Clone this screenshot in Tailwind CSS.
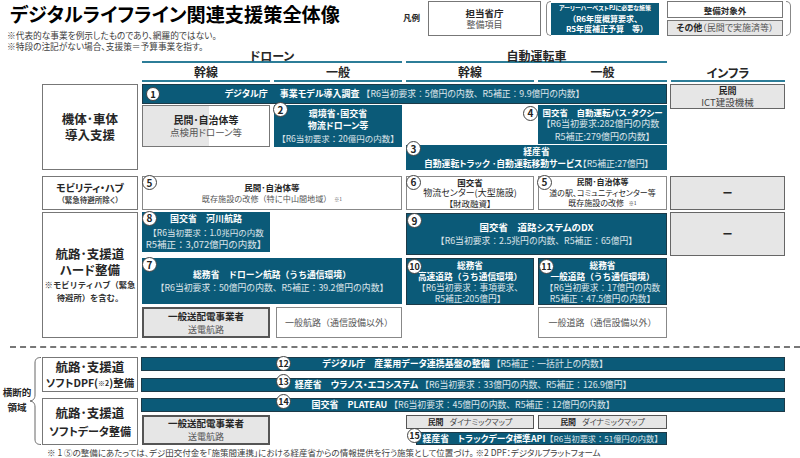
<!DOCTYPE html>
<html lang="ja">
<head>
    <meta charset="UTF-8">
    <title>デジタルライフライン関連支援策全体像</title>
    <script src="https://cdn.jsdelivr.net/npm/@tailwindcss/browser@4"></script>
</head>
<body class="bg-white">
<div class="w-[800px] h-[458px] overflow-hidden relative text-[#262626] font-['Noto_Sans_CJK_JP','Noto_Sans',sans-serif] [font-feature-settings:'palt'] text-[9px] leading-[12px]">

    <!-- title + legend -->
    <header class="flex h-[50px]">
        <div class="w-[403px] pl-[10px]">
            <h1 class="text-[19.2px] leading-[28px] font-bold text-black">デジタルライフライン関連支援策全体像</h1>
            <p class="-ml-[3px] mt-[2px] text-[8.7px] leading-[11px] text-[#404040]">※代表的な事業を例示したものであり、網羅的ではない。<br>※特段の注記がない場合、支援策＝予算事業を指す。</p>
        </div>
        <div class="flex items-start pt-[1px]">
            <div class="w-[25px] pt-[10px] text-[8.5px] font-bold">凡例</div>
            <div class="w-[113px] h-[35px] border border-[#777] flex flex-col items-center justify-center">
                <b class="text-[9.5px]">担当省庁</b>
                <span class="text-[#555]">整備項目</span>
            </div>
            <div class="ml-[5px] w-[5px] h-[35px] border-l border-y border-[#888] rounded-l-[6px]"></div>
            <div class="w-[108px] h-[32px] mt-[2px] bg-[#0b5a78] text-white font-bold text-[8px] leading-[10.5px] flex flex-col items-center justify-center">
                <span class="text-[6px]">アーリーハーベストPJに必要な施策</span>
                <span>（R6年度概算要求、</span>
                <span>R5年度補正予算　等）</span>
            </div>
            <div class="ml-[8px] w-[116px] flex flex-col gap-[2px]">
                <div class="h-[17px] border border-[#777] bg-white flex items-center justify-center font-bold text-[8.5px]">整備対象外</div>
                <div class="h-[16px] border border-[#777] bg-[#e6e6e6] flex items-center justify-center text-[#555]"><b class="text-[#262626]">その他</b>（民間で実施済等）</div>
            </div>
            <div class="ml-[3px] w-[5px] h-[35px] border-r border-y border-[#888] rounded-r-[6px]"></div>
        </div>
    </header>

    <!-- column headers -->
    <div class="ml-[142px] grid grid-cols-[128px_128px_128px_129px_114px] gap-x-[4px] text-[12px] leading-[13px] font-bold text-center h-[34px]">
        <div class="col-span-2 h-[14px] border-b-2 border-[#2c7d98] -mt-[1px]">ドローン</div>
        <div class="col-span-2 h-[14px] border-b-2 border-[#2c7d98] -mt-[1px]">自動運転車</div>
        <div></div>
        <div class="h-[17px] border-b-2 border-[#2c7d98]">幹線</div>
        <div class="h-[17px] border-b-2 border-[#2c7d98]">一般</div>
        <div class="h-[17px] border-b-2 border-[#2c7d98]">幹線</div>
        <div class="h-[17px] border-b-2 border-[#2c7d98]">一般</div>
        <div class="-mt-[14px] h-[31px] pt-[15px] border-b-2 border-[#2c7d98]">インフラ</div>
    </div>

    <!-- 機体・車体 -->
    <section class="ml-[42px] grid grid-cols-[96px_128px_128px_128px_129px_114px] grid-rows-[20px_39px_25px] gap-x-[4px] gap-y-[1px] h-[86px]">
        <div class="row-span-3 col-start-1 row-start-1 border border-[#777] flex items-center justify-center text-center font-bold text-[12.5px] leading-[16px]">機体･車体<br>導入支援</div>
        <div class="relative col-start-2 col-span-4 row-start-1 bg-[#0b5a78] border border-[#1c3a48] text-white flex items-center justify-center gap-[12px]">
            <span class="absolute left-[3px] top-[2px] w-[14px] h-[14px] rounded-full bg-white border border-[#444] text-[#222] flex items-center justify-center font-bold text-[9.5px]">1</span>
            <b>デジタル庁</b>
            <span><b>事業モデル導入調査</b> <span class="text-white/85 [font-feature-settings:normal] text-[8.8px]">【R6当初要求：5億円の内数、R5補正：9.9億円の内数】</span></span>
        </div>
        <div class="col-start-6 row-start-1 row-span-2 self-start h-[25px] ml-[-1px] bg-[#e6e6e6] border border-[#666] flex flex-col items-center justify-center">
            <b class="leading-[11px]">民間</b><span class="text-[#444] text-[9.5px] leading-[12px]">ICT建設機械</span>
        </div>
        <div class="col-start-2 row-start-2 row-span-2 self-start h-[42px] border border-[#777] bg-[linear-gradient(90deg,#e6e6e6_52%,#fff_52%)] flex flex-col items-center justify-center">
            <b class="text-[10px]">民間･自治体等</b>
            <span class="text-[#555] text-[9.5px]">点検用ドローン等</span>
        </div>
        <div class="relative col-start-3 row-start-2 row-span-2 self-start h-[42px] bg-[#0b5a78] text-white flex flex-col items-center justify-center">
            <span class="absolute -left-[1px] -top-[3px] w-[15px] h-[15px] rounded-full bg-white border border-[#444] text-[#222] flex items-center justify-center font-bold text-[10px]">2</span>
            <b>環境省･国交省</b>
            <b>物流ドローン等</b>
            <span class="text-white/85 text-[8.5px] [font-feature-settings:normal]">【R6当初要求：20億円の内数】</span>
        </div>
        <div class="relative col-start-5 row-start-2 bg-[#0b5a78] text-white flex flex-col items-center justify-center leading-[12.5px] text-[9px]">
            <span class="absolute -left-[15px] top-[1px] w-[15px] h-[15px] rounded-full bg-white border border-[#444] text-[#222] flex items-center justify-center font-bold text-[10px]">4</span>
            <b class="text-[8.5px]">国交省　自動運転バス･タクシー</b>
            <span class="text-white/85">【R6当初要求:282億円の内数</span>
            <span class="text-white/85">R5補正:279億円の内数】</span>
        </div>
        <div class="relative col-start-4 col-span-2 row-start-3 bg-[#0b5a78] text-white flex flex-col items-center justify-center leading-[12px] text-[8.8px]">
            <span class="absolute left-[0px] -top-[4px] w-[15px] h-[15px] rounded-full bg-white border border-[#444] text-[#222] flex items-center justify-center font-bold text-[10px]">3</span>
            <b>経産省</b>
            <span><b>自動運転トラック ･自動運転移動サービス</b><span class="text-white/85">【R5補正:27億円】</span></span>
        </div>
    </section>

    <!-- モビリティ・ハブ -->
    <section class="ml-[42px] mt-[6px] grid grid-cols-[96px_260px_128px_129px_114px] gap-x-[4px] h-[31px]">
        <div class="border border-[#777] flex flex-col items-center justify-center text-center">
            <b class="text-[10px] leading-[14px]">モビリティ・ハブ</b>
            <b class="text-[7.5px] leading-[10px] text-[#444]">（緊急待避所除く）</b>
        </div>
        <div class="relative border border-[#888] flex flex-col items-center justify-center text-[8.5px]">
            <span class="absolute -left-[1px] -top-[2px] w-[15px] h-[15px] rounded-full bg-white border border-[#444] flex items-center justify-center font-bold text-[10px]">5</span>
            <b>民間･自治体等</b>
            <span class="text-[#555] text-[8.1px] [font-feature-settings:normal]">既存施設の改修（特に中山間地域）<span class="text-[5px] align-top ml-[3px]">※1</span></span>
        </div>
        <div class="relative border border-[#888] flex flex-col items-center justify-center text-[9px] leading-[10.5px]">
            <span class="absolute -left-[1px] -top-[2px] w-[15px] h-[15px] rounded-full bg-white border border-[#444] flex items-center justify-center font-bold text-[10px]">6</span>
            <b class="text-[8.5px]">国交省</b>
            <span>物流センター(大型施設)</span>
            <span class="text-[8.5px]">【財政融資】</span>
        </div>
        <div class="relative border border-[#888] flex flex-col items-center justify-center text-[8px] leading-[10.5px]">
            <span class="absolute -left-[2px] -top-[2px] w-[15px] h-[15px] rounded-full bg-white border border-[#444] flex items-center justify-center font-bold text-[10px]">5</span>
            <b>民間･自治体等</b>
            <span>道の駅、コミュニティセンター等</span>
            <span>既存施設の改修 <span class="text-[5px] align-top ml-[3px]">※1</span></span>
        </div>
        <div class="ml-[-1px] bg-[#e6e6e6] border border-[#666] flex items-center justify-center font-bold text-[10px]">ー</div>
    </section>

    <!-- 航路・支援道 ハード -->
    <section class="ml-[42px] mt-[5px] grid grid-cols-[96px_128px_128px_128px_129px_114px] grid-rows-[44px_47px_31px] gap-x-[4px] gap-y-[2px] h-[126px]">
        <div class="row-span-3 border border-[#777] flex flex-col items-center justify-center text-center">
            <b class="text-[12.5px] leading-[16px]">航路･支援道<br>ハード整備</b>
            <b class="text-[8.3px] leading-[13px] text-[#333] [font-feature-settings:normal]">※モビリティハブ（緊急<br>待避所）を含む。</b>
        </div>
        <div class="relative col-start-2 row-start-1 self-start h-[40px] bg-[#0b5a78] text-white flex flex-col items-center justify-center leading-[12.5px]">
            <span class="absolute left-0 -top-[1px] w-[15px] h-[15px] rounded-full bg-white border border-[#444] text-[#222] flex items-center justify-center font-bold text-[10px]">8</span>
            <b>国交省　河川航路</b>
            <span class="text-white/85 text-[8.5px] [font-feature-settings:normal]">【R6当初要求：1.0兆円の内数</span>
            <span class="text-white/85 text-[9.5px] [font-feature-settings:normal]">R5補正：3,072億円の内数】</span>
        </div>
        <div class="relative col-start-2 col-span-2 row-start-2 h-[46px] bg-[#0b5a78] text-white flex flex-col items-center justify-center leading-[13px]">
            <span class="absolute left-0 -top-[1px] w-[15px] h-[15px] rounded-full bg-white border border-[#444] text-[#222] flex items-center justify-center font-bold text-[10px]">7</span>
            <b class="[font-feature-settings:normal] text-[8.8px]">総務省　ドローン航路（うち通信環境）</b>
            <span class="text-white/85 [font-feature-settings:normal] text-[8.8px]">【R6当初要求：50億円の内数、R5補正：39.2億円の内数】</span>
        </div>
        <div class="relative col-start-4 col-span-2 row-start-1 mt-[1px] h-[42px] bg-[#0b5a78] border border-[#1c3a48] text-white flex flex-col items-center justify-center leading-[13px]">
            <span class="absolute left-0 -top-[1px] w-[15px] h-[15px] rounded-full bg-white border border-[#444] text-[#222] flex items-center justify-center font-bold text-[10px]">9</span>
            <b class="text-[9.5px]">国交省　道路システムのDX</b>
            <span class="text-white/85 [font-feature-settings:normal] text-[8.8px]">【R6当初要求：2.5兆円の内数、R5補正：65億円】</span>
        </div>
        <div class="col-start-6 row-start-1 ml-[-1px] bg-[#e6e6e6] border border-[#666] flex items-center justify-center font-bold text-[10px]">ー</div>
        <div class="relative col-start-4 row-start-2 bg-[#0b5a78] border border-[#1c3a48] text-white flex flex-col items-center justify-center text-[8.7px] leading-[11px] [font-feature-settings:normal]">
            <span class="absolute left-0 top-0 w-[15px] h-[15px] rounded-full bg-white border border-[#444] text-[#222] flex items-center justify-center font-bold text-[9px]">10</span>
            <b>総務省</b>
            <b>高速道路（うち通信環境）</b>
            <span class="text-white/85">【R6当初要求：事項要求、</span>
            <span class="text-white/85">R5補正:205億円】</span>
        </div>
        <div class="relative col-start-5 row-start-2 bg-[#0b5a78] border border-[#1c3a48] text-white flex flex-col items-center justify-center text-[8.7px] leading-[11px] [font-feature-settings:normal]">
            <span class="absolute left-0 top-0 w-[15px] h-[15px] rounded-full bg-white border border-[#444] text-[#222] flex items-center justify-center font-bold text-[9px]">11</span>
            <b>総務省</b>
            <b>一般道路（うち通信環境）</b>
            <span class="text-white/85">【R6当初要求：17億円の内数</span>
            <span class="text-white/85">R5補正：47.5億円の内数】</span>
        </div>
        <div class="col-start-2 row-start-3 bg-[#e6e6e6] border-2 border-[#555] flex flex-col items-center justify-center">
            <b class="text-[9.5px] leading-[13px]">一般送配電事業者</b>
            <span class="text-[#555] leading-[13px]">送電航路</span>
        </div>
        <div class="col-start-3 row-start-3 ml-[2px] border border-[#888] flex items-center justify-center text-[#555] text-[9px] [font-feature-settings:normal]">一般航路（通信設備以外）</div>
        <div class="col-start-5 row-start-3 border border-[#888] flex items-center justify-center text-[#555] text-[9px] [font-feature-settings:normal]">一般道路（通信設備以外）</div>
    </section>

    <div class="ml-[10px] mt-[8px] border-t-2 border-dashed border-[#777]"></div>

    <!-- 横断的領域 -->
    <section class="mt-[9px] flex">
        <div class="relative w-[42px] h-[88px]">
            <div class="absolute left-[2px] top-[28px] text-[9.5px] leading-[15px] font-bold text-center w-[30px]">横断的<br>領域</div>
            <svg class="absolute left-0 top-0" width="42" height="88" viewBox="0 0 42 88" fill="none" stroke="#666" stroke-width="1">
                <path d="M41 0.5 C37 0.5 35 2 35 6 L35 38 C35 42 33 43.5 30 44 C33 44.5 35 46 35 50 L35 82 C35 86 37 87.5 41 87.5"/>
            </svg>
        </div>
        <div class="w-[743px]">
            <div class="grid grid-cols-[96px_1fr] gap-x-[3px]">
                <div class="row-span-2 h-[35px] border border-[#777] flex flex-col items-center justify-center text-center font-bold leading-[16px]">
                    <span class="text-[12.5px]">航路･支援道</span>
                    <span class="text-[10.5px]">ソフトDPF(<span class="text-[7px] align-top">※2</span>)整備</span>
                </div>
                <div class="relative h-[14px] bg-[#0b5a78] border border-[#1c3a48] text-white flex items-center justify-center">
                    <span class="absolute left-[134px] -top-[2px] w-[15px] h-[15px] rounded-full bg-white border border-[#444] text-[#222] flex items-center justify-center font-bold text-[9px]">12</span>
                    <span class="ml-[4px]"><b>デジタル庁　産業用データ連携基盤の整備</b> <span class="text-white/85 [font-feature-settings:normal] text-[8.8px]">【R5補正：一括計上の内数】</span></span>
                </div>
                <div class="relative mt-[7px] h-[14px] bg-[#0b5a78] border border-[#1c3a48] text-white flex items-center justify-center">
                    <span class="absolute left-[134px] -top-[5px] w-[15px] h-[15px] rounded-full bg-white border border-[#444] text-[#222] flex items-center justify-center font-bold text-[9px]">13</span>
                    <span><b>経産省　ウラノス・エコシステム</b> <span class="text-white/85 [font-feature-settings:normal] text-[8.8px]">【R6当初要求：33億円の内数、R5補正：126.9億円】</span></span>
                </div>
            </div>
            <div class="mt-[6px] grid grid-cols-[96px_128px_128px_128px_129px_114px] grid-rows-[14px_14px_14px] gap-x-[4px] gap-y-[3px]">
                <div class="row-span-3 h-[47px] border border-[#777] flex flex-col items-center justify-center text-center font-bold text-[12.5px] leading-[18px]">
                    <span>航路･支援道</span>
                    <span class="text-[11px]">ソフトデータ整備</span>
                </div>
                <div class="relative col-start-2 col-span-5 -ml-[1px] bg-[#0b5a78] border border-[#1c3a48] text-white flex items-center justify-center">
                    <span class="absolute left-[134px] -top-[5px] w-[15px] h-[15px] rounded-full bg-white border border-[#444] text-[#222] flex items-center justify-center font-bold text-[9px]">14</span>
                    <span><b>国交省　PLATEAU</b> <span class="text-white/85 [font-feature-settings:normal] text-[8.8px]">【R6当初要求：45億円の内数、R5補正：12億円の内数】</span></span>
                </div>
                <div class="col-start-2 row-start-2 row-span-2 h-[30px] bg-[#e6e6e6] border-2 border-[#555] flex flex-col items-center justify-center">
                    <b class="text-[9.5px] leading-[13px]">一般送配電事業者</b>
                    <span class="text-[#555] leading-[13px]">送電航路</span>
                </div>
                <div class="col-start-4 row-start-2 bg-[#e6e6e6] border-[1.5px] border-[#555] flex items-center justify-center gap-[6px] text-[8px]"><b>民間</b><span class="text-[#444]">ダイナミックマップ</span></div>
                <div class="col-start-5 row-start-2 bg-[#e6e6e6] border-[1.5px] border-[#555] flex items-center justify-center gap-[6px] text-[8px]"><b>民間</b><span class="text-[#444]">ダイナミックマップ</span></div>
                <div class="relative col-start-4 col-span-2 row-start-3 ml-[10px] h-[13px] bg-[#0b5a78] border border-[#1c3a48] text-white flex items-center justify-center whitespace-nowrap">
                    <span class="absolute -left-[10px] -top-[5px] w-[15px] h-[15px] rounded-full bg-white border border-[#444] text-[#222] flex items-center justify-center font-bold text-[9px]">15</span>
                    <span class="ml-[2px]"><b class="text-[8.8px]">経産省　トラックデータ標準API</b><span class="text-white/85 [font-feature-settings:normal] text-[8.2px]">【R6当初要求：51億円の内数】</span></span>
                </div>
            </div>
        </div>
    </section>

    <p class="ml-[47px] text-[8.5px] leading-[12px] text-[#404040]">※ 1 ⑤の整備にあたっては、デジ田交付金を「施策間連携」における経産省からの情報提供を行う施策として位置づけ。 ※2 DPF：デジタルプラットフォーム</p>
</div>
</body>
</html>
